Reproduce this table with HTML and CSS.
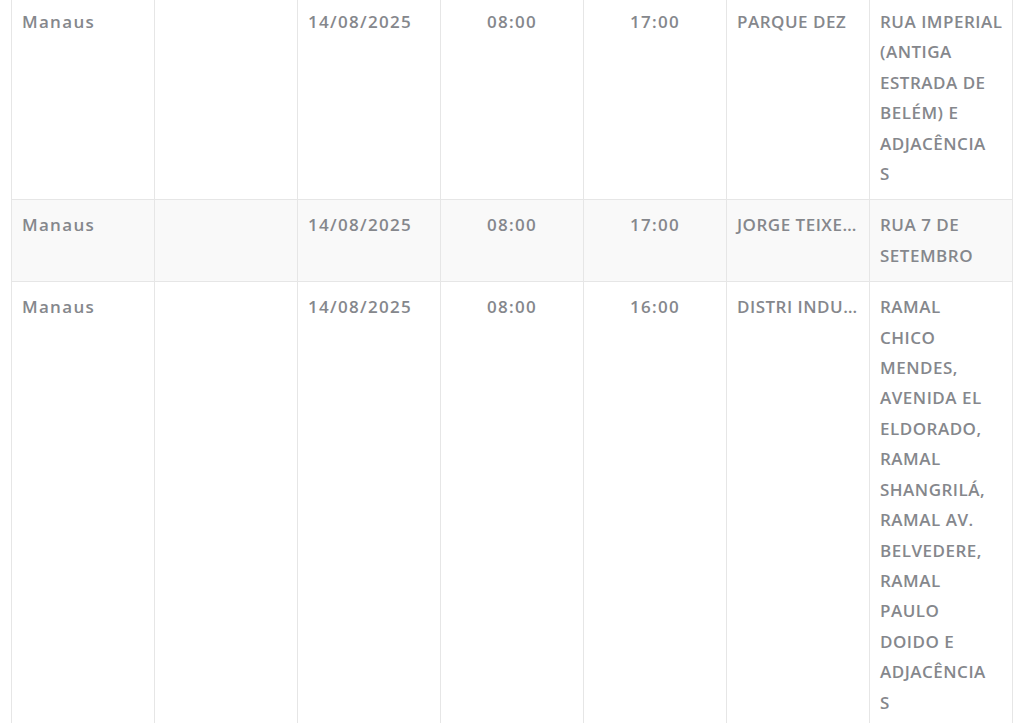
FILE: index.html
```html
<!DOCTYPE html>
<html lang="pt-BR">
<head>
<meta charset="utf-8">
<title>Interrupções programadas</title>
<link rel="stylesheet" href="styles.css">
</head>
<body>
<div class="page">
  <table class="schedule">
    <colgroup>
      <col class="col"><col class="col"><col class="col"><col class="col"><col class="col"><col class="col"><col class="col">
    </colgroup>
    <tbody>
      <tr>
        <td class="plain">Manaus</td>
        <td></td>
        <td class="plain">14/08/2025</td>
        <td class="plain center">08:00</td>
        <td class="plain center">17:00</td>
        <td class="upper trunc">PARQUE DEZ</td>
        <td class="upper lines">RUA IMPERIAL<br>(ANTIGA<br>ESTRADA DE<br>BELÉM) E<br>ADJACÊNCIA<br>S</td>
      </tr>
      <tr class="alt">
        <td class="plain">Manaus</td>
        <td></td>
        <td class="plain">14/08/2025</td>
        <td class="plain center">08:00</td>
        <td class="plain center">17:00</td>
        <td class="upper trunc">JORGE TEIXEIRA</td>
        <td class="upper lines">RUA 7 DE<br>SETEMBRO</td>
      </tr>
      <tr>
        <td class="plain">Manaus</td>
        <td></td>
        <td class="plain">14/08/2025</td>
        <td class="plain center">08:00</td>
        <td class="plain center">16:00</td>
        <td class="upper trunc">DISTRI INDUSTRIAL</td>
        <td class="upper lines">RAMAL<br>CHICO<br>MENDES,<br>AVENIDA EL<br>ELDORADO,<br>RAMAL<br>SHANGRILÁ,<br>RAMAL AV.<br>BELVEDERE,<br>RAMAL<br>PAULO<br>DOIDO E<br>ADJACÊNCIA<br>S</td>
      </tr>
    </tbody>
  </table>
</div>
</body>
</html>
```
FILE: styles.css
```css
html, body {
  margin: 0;
  padding: 0;
  background: #ffffff;
}

body {
  font-family: "Open Sans", "Noto Sans", sans-serif;
  font-size: 17px;
  font-weight: 600;
  color: #85878c;
}

.page {
  padding: 0 12px 0 11px;
  overflow: hidden;
  height: 723px;
}

.schedule {
  width: 1001px;
  margin-top: -4px;
  border-collapse: collapse;
  table-layout: fixed;
}

.col {
  width: 143px;
}

.schedule td {
  border: 1px solid #e6e6e6;
  padding: 10px;
  line-height: 30.4px;
  vertical-align: top;
  text-align: left;
  overflow: hidden;
}

.schedule tr.alt td {
  background: #f9f9f9;
}

.plain {
  letter-spacing: 1.3px;
}

.center {
  text-align: center !important;
}

.upper {
  text-transform: uppercase;
  letter-spacing: 0.5px;
}

.trunc {
  white-space: nowrap;
  text-overflow: ellipsis;
}

.lines {
  white-space: nowrap;
}
```
